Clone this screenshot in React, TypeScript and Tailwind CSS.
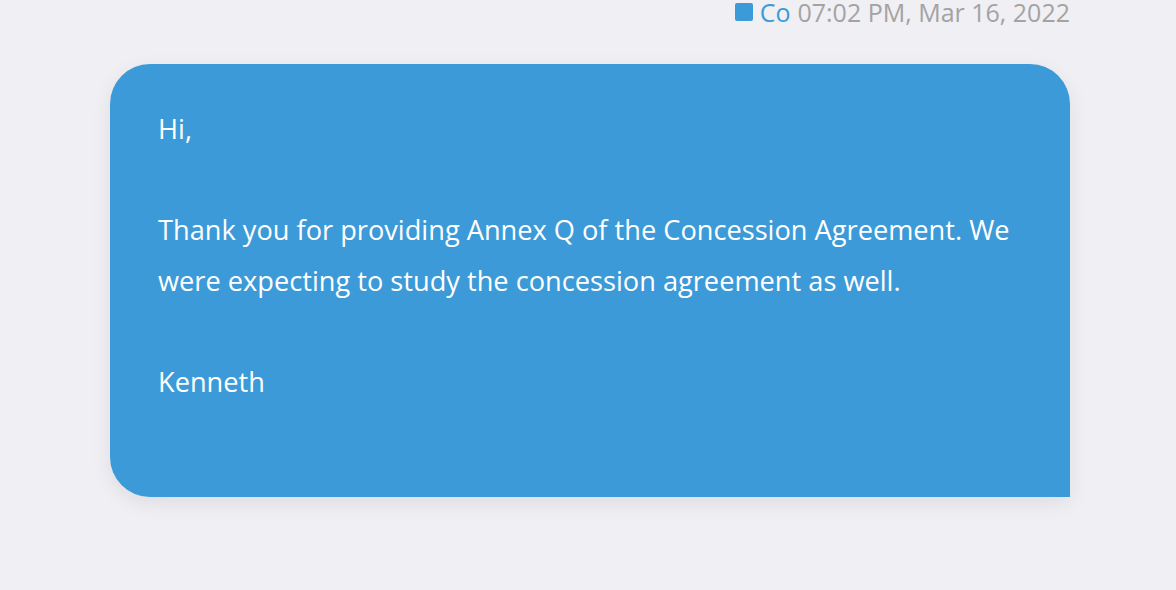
export default function App() {
  return (
    <div className="min-h-screen w-full bg-[#f0eff4] font-['Open_Sans',sans-serif]">
      <div className="ml-[110px] w-[960px] flex flex-col">
        <div className="flex items-center justify-end gap-[7px] h-[24px] text-[25px] leading-[24px]">
          <span className="w-[18px] h-[18px] rounded-[2px] bg-[#3c9ad8]" />
          <span className="text-[#3c9ad8]">Co</span>
          <span className="text-[#a3a3a3]">07:02 PM, Mar 16, 2022</span>
        </div>
        <div className="mt-[40px] rounded-tl-[40px] rounded-tr-[40px] rounded-bl-[40px] bg-[#3c9ad8] px-[48px] pt-[40px] pb-[90px] text-white text-[27.2px] leading-[50.5px] shadow-[0_6px_20px_rgba(0,0,0,0.08)]">
          <p>Hi,</p>
          <p>&nbsp;</p>
          <p>
            Thank you for providing Annex Q of the Concession Agreement. We
            were expecting to study the concession agreement as well.
          </p>
          <p>&nbsp;</p>
          <p>Kenneth</p>
        </div>
      </div>
    </div>
  );
}
